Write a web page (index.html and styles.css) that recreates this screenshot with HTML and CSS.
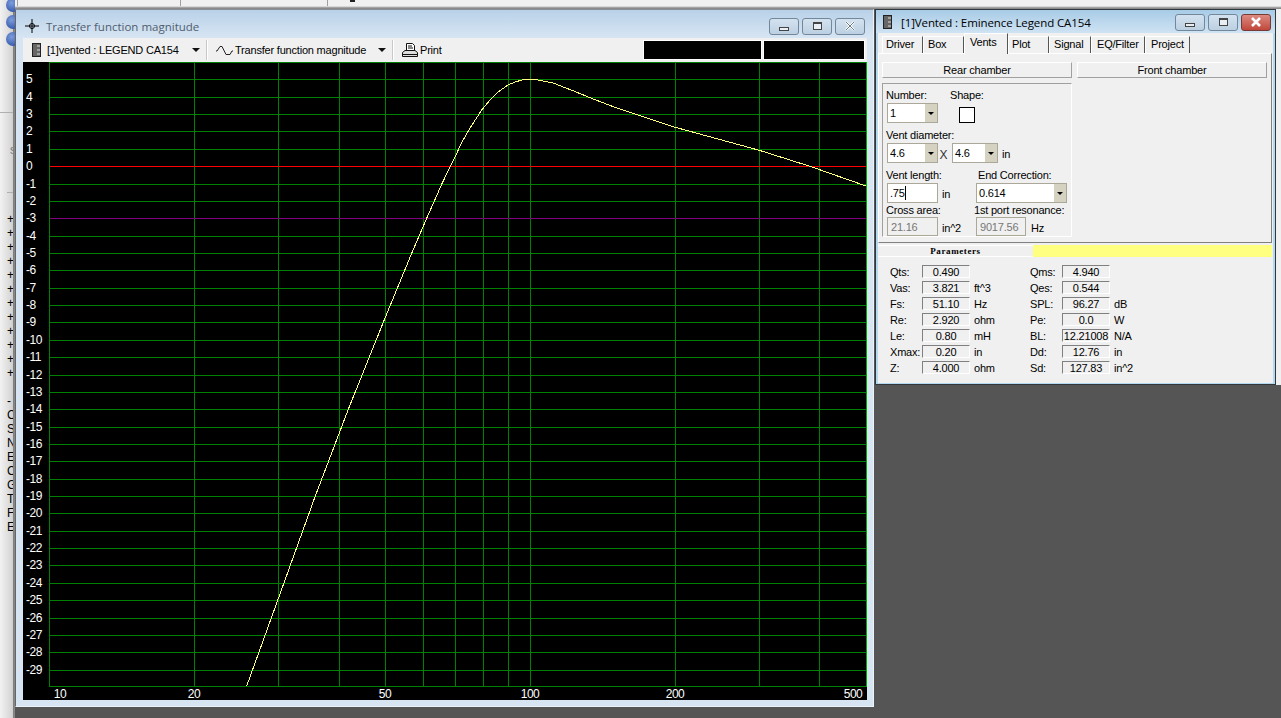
FILE: index.html
```html
<!DOCTYPE html>
<html lang="en">
<head>
    <meta charset="UTF-8">
    <title>Transfer function magnitude</title>
    <link rel="stylesheet" href="styles.css">
</head>
<body>
<div class="desktop">

    <!-- window behind, cut off on the left -->
    <div class="side-strip">
        <i class="bullet"></i>
        <i class="bullet"></i>
        <i class="bullet"></i>
        <hr class="strip-rule first">
        <div class="strip-s">s</div>
        <hr class="strip-rule second">
        <ul class="strip-list">
            <li>+</li><li>+</li><li>+</li><li>+</li><li>+</li><li>+</li>
            <li>+</li><li>+</li><li>+</li><li>+</li><li>+</li><li>+</li>
            <li>&nbsp;</li><li>-</li>
            <li>C</li><li>S</li><li>N</li><li>E</li><li>C</li><li>G</li><li>T</li><li>F</li><li>E</li>
        </ul>
    </div>
    <div class="top-strip">
        <span class="cell first"></span><span class="cell second"></span><span class="cell third"></span><span class="mark"></span>
    </div>
    <div class="right-strip"></div>

    <!-- chart window -->
    <section class="win chart-win">
        <div class="title-bar">
            <svg class="title-icon" width="14" height="14" viewBox="0 0 14 14">
                <path d="M7 0V14M0 7H14" stroke="#000" fill="none"/>
                <circle cx="7" cy="7" r="2.5" stroke="#000" fill="none"/>
            </svg>
            <span class="title-text dim">Transfer function magnitude</span>
            <div class="win-btns">
                <span class="win-btn"><i class="min-glyph"></i></span>
                <span class="win-btn"><i class="max-glyph"></i></span>
                <span class="win-btn">
                    <svg width="12" height="10" viewBox="0 0 12 10"><path d="M2 1L10 9M10 1L2 9" stroke="#fff" stroke-width="2.4"/><path d="M2 1L10 9M10 1L2 9" stroke="#6a7a8a" stroke-width="1"/></svg>
                </span>
            </div>
        </div>
        <div class="toolbar">
            <svg class="speaker" width="9" height="14" viewBox="0 0 9 14">
                <rect x="0.5" y="0.5" width="8" height="13" fill="#666" stroke="#222"/>
                <path d="M5 3H8M5 7H8M5 11H8" stroke="#ddd"/>
            </svg>
            <span class="tool-label driver-name">[1]vented : LEGEND CA154</span>
            <i class="drop-arrow"></i>
            <i class="tool-sep"></i>
            <svg class="sine" width="17" height="11" viewBox="0 0 17 11">
                <path d="M0 6H1L4 1.500H6L10 9.500H14L16 6H17" fill="none" stroke="#222"/>
            </svg>
            <span class="tool-label graph-name">Transfer function magnitude</span>
            <i class="drop-arrow"></i>
            <i class="tool-sep"></i>
            <svg class="printer" width="16" height="15" viewBox="0 0 16 15">
                <path d="M4.500 .5H10.500L12.500 2.500V7.500H4.500Z" fill="#fff" stroke="#111"/>
                <path d="M6 3H10M6 5H11" stroke="#111"/>
                <path d="M.5 9.500L3 7.500H13L15.500 9.500V13.500H.5Z" fill="#ddd" stroke="#111"/>
                <path d="M1 11.500H15" stroke="#111"/>
            </svg>
            <span class="tool-label print-name">Print</span>
            <div class="status-boxes">
                <span class="status first"></span>
                <span class="status second"></span>
            </div>
        </div>

        <svg class="plot" width="844" height="638" viewBox="23 62 844 638">
            <rect x="23" y="62" width="844" height="638" fill="#000"/>
            <!-- y grid -->
            <path class="grid" d="M49 62.500H867M49 79.500H866M49 97.500H866M49 114.500H866M49 131.500H866M49 149.500H866M49 184.500H866M49 201.500H866M49 236.500H866M49 253.500H866M49 270.500H866M49 288.500H866M49 305.500H866M49 322.500H866M49 340.500H866M49 357.500H866M49 375.500H866M49 392.500H866M49 409.500H866M49 427.500H866M49 444.500H866M49 461.500H866M49 479.500H866M49 496.500H866M49 513.500H866M49 531.500H866M49 548.500H866M49 565.500H866M49 583.500H866M49 600.500H866M49 618.500H866M49 635.500H866M49 652.500H866M49 670.500H866M49 686.500H867"/>
            <!-- x grid -->
            <path class="grid" d="M49.500 62V687M194.500 62V687M278.500 62V687M339.500 62V687M385.500 62V687M423.500 62V687M455.500 62V687M483.500 62V687M508.500 62V687M530.500 62V687M675.500 62V687M759.500 62V687M819.500 62V687"/>
            <path class="grid edge" d="M866.500 62V687"/>
            <path class="zero-line" d="M50 166.500H866"/>
            <path class="minus3-line" d="M50 218.500H866"/>
            <polyline class="curve" points="246.700,686 277.700,600.300 315.300,496 348.300,409.300 383.300,322.300 411.700,253.300 426.700,218.300 441.700,184.300 450,167 455,157 462,142 470,128 481.700,110 490,100 498,92 508,85 515,82 522,80 530,79.500 538,80 553,83 573,90.700 590,97.700 613,106.600 640,115.700 675.300,127.300 759.300,150.300 810,166.300 866,186"/>
            <g class="y-labels">
                <text x="26" y="83">5</text>
                <text x="26" y="101">4</text>
                <text x="26" y="118">3</text>
                <text x="26" y="135">2</text>
                <text x="26" y="153">1</text>
                <text x="26" y="170">0</text>
                <text x="26" y="188">-1</text>
                <text x="26" y="205">-2</text>
                <text x="26" y="222">-3</text>
                <text x="26" y="240">-4</text>
                <text x="26" y="257">-5</text>
                <text x="26" y="274">-6</text>
                <text x="26" y="292">-7</text>
                <text x="26" y="309">-8</text>
                <text x="26" y="326">-9</text>
                <text x="26" y="344">-10</text>
                <text x="26" y="361">-11</text>
                <text x="26" y="379">-12</text>
                <text x="26" y="396">-13</text>
                <text x="26" y="413">-14</text>
                <text x="26" y="431">-15</text>
                <text x="26" y="448">-16</text>
                <text x="26" y="465">-17</text>
                <text x="26" y="483">-18</text>
                <text x="26" y="500">-19</text>
                <text x="26" y="517">-20</text>
                <text x="26" y="535">-21</text>
                <text x="26" y="552">-22</text>
                <text x="26" y="569">-23</text>
                <text x="26" y="587">-24</text>
                <text x="26" y="604">-25</text>
                <text x="26" y="622">-26</text>
                <text x="26" y="639">-27</text>
                <text x="26" y="656">-28</text>
                <text x="26" y="674">-29</text>
            </g>
            <g class="x-labels">
                <text x="60" y="698">10</text>
                <text x="194" y="698">20</text>
                <text x="385" y="698">50</text>
                <text x="530" y="698">100</text>
                <text x="675" y="698">200</text>
                <text x="853" y="698">500</text>
            </g>
        </svg>
    </section>

    <!-- driver window -->
    <section class="win driver-win">
        <div class="title-bar">
            <svg class="title-icon small" width="9" height="14" viewBox="0 0 9 14">
                <rect x="0.5" y="0.5" width="8" height="13" fill="#666" stroke="#222"/>
                <path d="M5 3H8M5 7H8M5 11H8" stroke="#ddd"/>
            </svg>
            <span class="title-text">[1]Vented : Eminence Legend CA154</span>
            <div class="win-btns">
                <span class="win-btn"><i class="min-glyph"></i></span>
                <span class="win-btn"><i class="max-glyph"></i></span>
                <span class="win-btn close">
                    <svg width="12" height="10" viewBox="0 0 12 10"><path d="M2 1L10 9M10 1L2 9" stroke="#fff" stroke-width="2.600"/></svg>
                </span>
            </div>
        </div>
        <div class="client">
            <div class="tabs">
                <span class="tab t-driver">Driver</span>
                <span class="tab t-box">Box</span>
                <span class="tab t-vents active">Vents</span>
                <span class="tab t-plot">Plot</span>
                <span class="tab t-signal">Signal</span>
                <span class="tab t-eq">EQ/Filter</span>
                <span class="tab t-project">Project</span>
            </div>
            <div class="tab-body">
                <div class="chambers">
                    <button class="chamber">Rear chamber</button>
                    <button class="chamber">Front chamber</button>
                </div>
                <div class="rear-panel">
                    <div class="label-row top">
                        <label class="lab number">Number:</label>
                        <label class="lab">Shape:</label>
                    </div>
                    <div class="field-row">
                        <span class="combo w51"><span class="combo-val">1</span><i class="combo-btn"></i></span>
                        <span class="shape-box"></span>
                    </div>
                    <div class="label-row">
                        <label class="lab">Vent diameter:</label>
                    </div>
                    <div class="field-row">
                        <span class="combo w51"><span class="combo-val">4.6</span><i class="combo-btn"></i></span>
                        <span class="times">X</span>
                        <span class="combo w46"><span class="combo-val">4.6</span><i class="combo-btn"></i></span>
                        <span class="unit after-combo">in</span>
                    </div>
                    <div class="label-row">
                        <label class="lab length">Vent length:</label>
                        <label class="lab">End Correction:</label>
                    </div>
                    <div class="field-row">
                        <span class="input w51"><span>.75</span><i class="caret"></i></span>
                        <span class="unit col">in</span>
                        <span class="combo w91"><span class="combo-val">0.614</span><i class="combo-btn"></i></span>
                    </div>
                    <div class="label-row snug">
                        <label class="lab cross">Cross area:</label>
                        <label class="lab">1st port resonance:</label>
                    </div>
                    <div class="field-row snug">
                        <span class="input readonly w51">21.16</span>
                        <span class="unit col">in^2</span>
                        <span class="input readonly w50">9017.56</span>
                        <span class="unit hz">Hz</span>
                    </div>
                </div>
            </div>
            <div class="param-head">
                <span class="param-tab">Parameters</span>
                <span class="param-fill"></span>
            </div>
            <div class="param-grid">
                <span>Qts:</span><b>0.490</b><span></span>
                <span>Qms:</span><b>4.940</b><span></span>
                <span>Vas:</span><b>3.821</b><span>ft^3</span>
                <span>Qes:</span><b>0.544</b><span></span>
                <span>Fs:</span><b>51.10</b><span>Hz</span>
                <span>SPL:</span><b>96.27</b><span>dB</span>
                <span>Re:</span><b>2.920</b><span>ohm</span>
                <span>Pe:</span><b>0.0</b><span>W</span>
                <span>Le:</span><b>0.80</b><span>mH</span>
                <span>BL:</span><b>12.21008</b><span>N/A</span>
                <span>Xmax:</span><b>0.20</b><span>in</span>
                <span>Dd:</span><b>12.76</b><span>in</span>
                <span>Z:</span><b>4.000</b><span>ohm</span>
                <span>Sd:</span><b>127.83</b><span>in^2</span>
            </div>
        </div>
    </section>

</div>
</body>
</html>
```

FILE: styles.css
```css
/* --- base --- */
:root {
    --face: #f0f0f0;
    --frame: #d7e5f3;
    --field-border: #aca899;
    --combo-btn: #d6d2c2;
    --grid: #008000;
}

* {
    box-sizing: border-box;
}

html, body {
    margin: 0;
    height: 100%;
    overflow: hidden;
}

body {
    font-family: "Liberation Sans", Arial, sans-serif;
    font-size: 11px;
    letter-spacing: -.2px;
    color: #000;
    background: #555;
}

.desktop {
    position: relative;
    width: 1281px;
    height: 718px;
    overflow: hidden;
    background: #555;
}

/* --- what shows of the windows behind --- */
.side-strip {
    position: absolute;
    left: 0;
    top: 0;
    width: 15px;
    height: 718px;
    overflow: hidden;
    display: flex;
    flex-direction: column;
    font-size: 12px;
    letter-spacing: 0;
    background: linear-gradient(to right, #f2f2f2, #d8d8d8 70%, #cfcfcf 85%, #7c7c7c 87%, #8c8c8c);
}

.bullet {
    flex: none;
    width: 14px;
    height: 14px;
    margin: 3px 0 0 6px;
    border-radius: 50%;
    background: radial-gradient(circle at 40% 35%, #7d9cdc, #3a5fb0 70%);
}

.bullet:first-child {
    margin-top: -2px;
}

.strip-rule {
    flex: none;
    width: 13px;
    height: 1px;
    margin: 0;
    border: 0;
    background: #b0b0b0;
}

.strip-rule.first {
    margin-top: 66px;
}

.strip-rule.second {
    margin-top: 35px;
    margin-left: 7px;
    width: 6px;
}

.strip-s {
    width: 13px;
    height: 14px;
    margin-top: 30px;
    padding-left: 10px;
    overflow: hidden;
    color: #777;
    line-height: 14px;
}

.strip-list {
    list-style: none;
    width: 13px;
    margin: 19px 0 0;
    padding: 0 0 0 7px;
    overflow: hidden;
    line-height: 14px;
}

.top-strip {
    position: absolute;
    left: 15px;
    top: 0;
    width: 1266px;
    height: 9px;
    display: flex;
    background: linear-gradient(to bottom, var(--face) 6px, #8a8a8a 8px);
}

.cell {
    height: 6px;
    border-right: 1px solid #a0a0a0;
}

.cell.first { width: 3px; }
.cell.second { width: 163px; }
.cell.third { width: 147px; }

.mark {
    width: 5px;
    height: 2px;
    margin-left: 22px;
    background: #222;
}

.right-strip {
    position: absolute;
    left: 1276px;
    top: 9px;
    width: 5px;
    height: 376px;
    background: var(--face);
}

/* --- windows --- */
.win {
    position: absolute;
    display: flex;
    flex-direction: column;
}

.chart-win {
    left: 15px;
    top: 9px;
    width: 859px;
    height: 698px;
    padding: 0 6px 6px 7px;
    background: var(--frame);
    border: 1px solid #eef3f9;
    border-left-color: #666;
    border-top-color: #8a8f96;
}

.driver-win {
    left: 875px;
    top: 9px;
    width: 401px;
    height: 376px;
    padding: 0 2px 1px 2px;
    background: #b4d8ee;
    border: 1px solid #30383e;
}

.title-bar {
    flex: none;
    display: flex;
    align-items: center;
    background: linear-gradient(to bottom, #b9d1e8, #d7e5f3);
}

.chart-win .title-bar {
    height: 28px;
    margin: 0 -6px 0 -7px;
    padding: 4px 8px 0 9px;
}

.driver-win .title-bar {
    height: 23px;
    margin: 0 -2px;
    padding: 2px 4px 1px 7px;
    background: linear-gradient(to bottom, #a8cbe6, #cfe3f3);
}

.title-icon {
    flex: none;
    margin-right: 7px;
}

.title-icon.small {
    margin-right: 9px;
}

.title-text {
    font-family: "Open Sans", "Noto Sans", sans-serif;
    font-size: 11.500px;
    letter-spacing: 0;
    white-space: nowrap;
}

.driver-win .title-text {
    letter-spacing: -.1px;
}

.title-text.dim {
    color: #4f5d6e;
}

.win-btns {
    display: flex;
    gap: 3px;
    margin-left: auto;
}

.win-btn {
    display: flex;
    align-items: center;
    justify-content: center;
    width: 30px;
    height: 17px;
    border: 1px solid #70879c;
    border-radius: 3px;
    background: linear-gradient(to bottom, #d4e2ef, #bcd0e2);
}

.win-btn.close {
    border-color: #7a3a34;
    background: linear-gradient(to bottom, #dc8a80, #c0483c);
}

.min-glyph {
    width: 10px;
    height: 4px;
    margin-top: 5px;
    border: 1px solid #444;
    background: #e8eef4;
}

.max-glyph {
    width: 9px;
    height: 8px;
    border: 1px solid #444;
    border-top-width: 2px;
    background: #e8eef4;
}

/* --- chart toolbar --- */
.toolbar {
    flex: none;
    display: flex;
    align-items: center;
    height: 24px;
    padding-left: 9px;
    background: var(--face);
}

.speaker {
    flex: none;
    margin-right: 6px;
}

.tool-label {
    white-space: nowrap;
}

.driver-name { width: 145px; }
.graph-name { width: 143px; }

.drop-arrow {
    flex: none;
    width: 0;
    height: 0;
    border: 4px solid transparent;
    border-top: 4px solid #111;
    border-bottom: 0;
}

.tool-sep {
    flex: none;
    width: 2px;
    height: 20px;
    margin: 0 8px 0 6px;
    background: #c8c8c8;
    border-right: 1px solid #fff;
}

.sine {
    flex: none;
    margin-right: 2px;
}

.printer {
    flex: none;
    margin-right: 2px;
}

.print-name {
    width: 223px;
}

.status-boxes {
    display: flex;
    gap: 1px;
}

.status {
    height: 20px;
    background: #000;
    border: 1px solid #fff;
}

.status.first { width: 119px; }
.status.second { width: 102px; }

/* --- plot --- */
.plot {
    flex: none;
    display: block;
}

.plot path,
.plot polyline {
    fill: none;
    stroke-width: 1;
    shape-rendering: crispEdges;
}

.grid { stroke: var(--grid); }
.grid.edge { stroke: #00a800; }
.zero-line { stroke: #ff0000; }
.minus3-line { stroke: #800080; }
.curve { stroke: #ffff80; }

.plot text {
    font-family: "Liberation Sans", Arial, sans-serif;
    font-size: 12px;
    letter-spacing: -.5px;
    fill: #fff;
}

.x-labels text {
    text-anchor: middle;
}

/* --- driver window contents --- */
.client {
    flex: 1;
    display: flex;
    flex-direction: column;
    min-height: 0;
    background: var(--face);
}

.tabs {
    flex: none;
    display: flex;
    align-items: flex-end;
    height: 20px;
    padding-left: 4px;
}

.tab {
    height: 17px;
    padding-left: 4px;
    line-height: 15px;
    border-top: 1px solid #fff;
    border-left: 1px solid #fff;
    border-right: 1px solid #555;
    white-space: nowrap;
}

.tab.active {
    position: relative;
    height: 21px;
    margin-bottom: -1px;
    padding: 1px 0 0 5px;
    background: var(--face);
}

.t-driver { width: 41px; padding-left: 3px; }
.t-box { width: 41px; }
.t-vents { width: 44px; }
.t-plot { width: 41px; padding-left: 3px; }
.t-signal { width: 42px; }
.t-eq { width: 54px; padding-left: 5px; }
.t-project { width: 45px; padding-left: 5px; }

.tab-body {
    flex: none;
    height: 190px;
    width: 394px;
    padding: 8px 0 0 3px;
    border-top: 1px solid #fff;
    border-right: 1px solid #808080;
    border-bottom: 1px solid #808080;
    border-left: 1px solid #fff;
}

.chambers {
    display: flex;
    gap: 5px;
}

.chamber {
    width: 190px;
    height: 16px;
    padding: 0;
    font: inherit;
    letter-spacing: inherit;
    color: #000;
    background: var(--face);
    border: 0;
    border-top: 1px solid #fff;
    border-left: 1px solid #fff;
    border-right: 1px solid #a0a0a0;
    border-bottom: 1px solid #a0a0a0;
}

.rear-panel {
    width: 190px;
    height: 154px;
    margin-top: 5px;
    padding-left: 4px;
    border-top: 1px solid #a0a0a0;
    border-left: 1px solid #a0a0a0;
    border-right: 1px solid #fff;
    border-bottom: 1px solid #fff;
}

.label-row {
    display: flex;
    height: 14px;
    margin-top: 5px;
    margin-left: -1px;
    line-height: 14px;
    white-space: nowrap;
}

.label-row.top {
    margin-top: 4px;
}

.label-row.snug {
    margin-top: 0;
}

.lab.number { width: 64px; }
.lab.length { width: 92px; }
.lab.cross { width: 88px; }

.field-row {
    display: flex;
    align-items: center;
    height: 20px;
    margin-top: 1px;
}

.field-row.snug {
    height: 19px;
    margin-top: 0;
}

.combo,
.input {
    flex: none;
    display: flex;
    align-items: center;
    height: 20px;
    background: #fff;
    border: 1px solid var(--field-border);
}

.w51 { width: 51px; }
.w46 { width: 46px; }
.w91 { width: 91px; }
.w50 { width: 50px; }

.combo-val {
    flex: 1;
    padding-left: 2px;
}

.combo-btn {
    flex: none;
    position: relative;
    width: 12px;
    height: 18px;
    background: var(--combo-btn);
}

.combo-btn::after {
    content: "";
    position: absolute;
    left: 3px;
    top: 8px;
    border: 3px solid transparent;
    border-top: 3px solid #000;
    border-bottom: 0;
}

.input {
    padding-left: 2px;
}

.caret {
    width: 1px;
    height: 14px;
    background: #000;
}

.input.readonly {
    height: 19px;
    padding-left: 3px;
    color: #777;
    background: var(--face);
}

.shape-box {
    width: 16px;
    height: 16px;
    margin: 3px 0 0 21px;
    background: #fff;
    border: 1px solid #000;
}

.times {
    width: 14px;
    padding: 3px 3px 0 0;
    text-align: center;
    font-size: 12px;
    color: #333;
}

.unit {
    padding-top: 2px;
}

.unit.after-combo { margin-left: 4px; }
.unit.col { width: 34px; margin-left: 4px; }
.unit.hz { margin-left: 5px; }

/* --- parameters block --- */
.param-head {
    flex: none;
    display: flex;
    height: 12px;
    margin-top: 2px;
}

.param-tab {
    width: 155px;
    font-family: "Liberation Serif", serif;
    font-size: 9px;
    font-weight: bold;
    line-height: 10px;
    letter-spacing: .6px;
    text-align: center;
    border-top: 1px solid #fff;
    border-bottom: 1px solid #fff;
}

.param-fill {
    width: 239px;
    background: #ffff80;
}

.param-grid {
    display: grid;
    grid-template-columns: 32px 48px 60px 32px 48px 40px;
    grid-auto-rows: 13px;
    row-gap: 3px;
    padding: 8px 0 0 12px;
    line-height: 14px;
}

.param-grid span:nth-child(3n) {
    padding-left: 4px;
}

.param-grid b {
    font-weight: normal;
    line-height: 12px;
    text-align: center;
    white-space: nowrap;
    border-top: 1px solid #808080;
    border-left: 1px solid #808080;
    border-right: 1px solid #fff;
    border-bottom: 1px solid #fff;
}
```
